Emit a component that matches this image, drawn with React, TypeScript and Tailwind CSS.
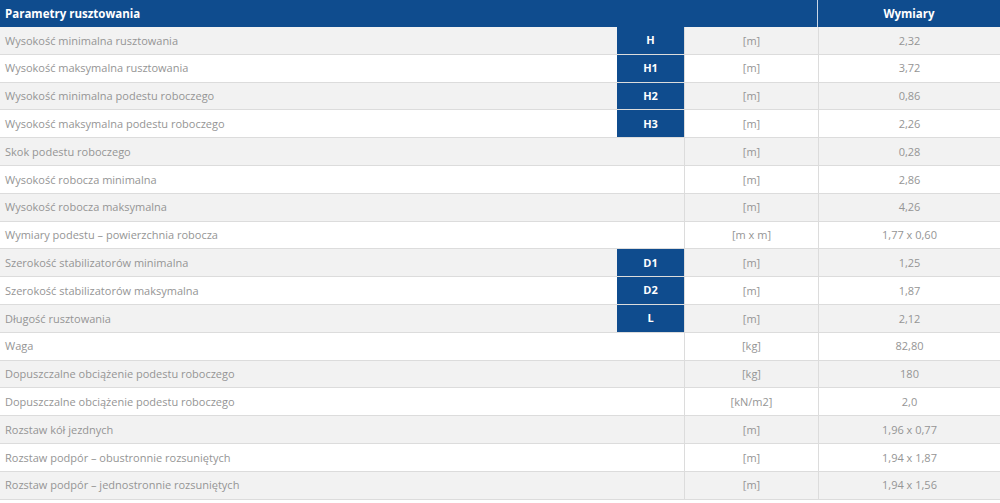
const rows: [string, string, string, string][] = [
  ['Wysokość minimalna rusztowania', 'H', '[m]', '2,32'],
  ['Wysokość maksymalna rusztowania', 'H1', '[m]', '3,72'],
  ['Wysokość minimalna podestu roboczego', 'H2', '[m]', '0,86'],
  ['Wysokość maksymalna podestu roboczego', 'H3', '[m]', '2,26'],
  ['Skok podestu roboczego', '', '[m]', '0,28'],
  ['Wysokość robocza minimalna', '', '[m]', '2,86'],
  ['Wysokość robocza maksymalna', '', '[m]', '4,26'],
  ['Wymiary podestu – powierzchnia robocza', '', '[m x m]', '1,77 x 0,60'],
  ['Szerokość stabilizatorów minimalna', 'D1', '[m]', '1,25'],
  ['Szerokość stabilizatorów maksymalna', 'D2', '[m]', '1,87'],
  ['Długość rusztowania', 'L', '[m]', '2,12'],
  ['Waga', '', '[kg]', '82,80'],
  ['Dopuszczalne obciążenie podestu roboczego', '', '[kg]', '180'],
  ['Dopuszczalne obciążenie podestu roboczego', '', '[kN/m2]', '2,0'],
  ['Rozstaw kół jezdnych', '', '[m]', '1,96 x 0,77'],
  ['Rozstaw podpór – obustronnie rozsuniętych', '', '[m]', '1,94 x 1,87'],
  ['Rozstaw podpór – jednostronnie rozsuniętych', '', '[m]', '1,94 x 1,56'],
]

export default function App() {
  return (
    <div className="w-[1000px] h-[503px] bg-white font-['Open_Sans',sans-serif] text-[11px]">
      <div className="grid grid-cols-[818px_1fr] h-[27px] bg-[#0f4c8e] text-white font-bold text-[11.5px]">
        <div className="flex items-center pl-[5px] border-r border-[#c9d6e6]">Parametry rusztowania</div>
        <div className="flex items-center justify-center">Wymiary</div>
      </div>
      {rows.map(([name, sym, unit, val], i) => (
        <div
          key={i}
          className={`grid grid-cols-[617px_67px_134px_1fr] h-[27.8px] border-b border-[#dcdcdc] text-[#959595] ${
            i % 2 === 0 ? 'bg-[#f2f2f2]' : 'bg-white'
          }`}
        >
          <div className="flex items-center pl-[5px] pt-px">{name}</div>
          <div
            className={`flex items-center justify-center font-bold text-white ${
              sym ? 'bg-[#0f4c8e]' : ''
            }`}
          >
            {sym}
          </div>
          <div className="flex items-center justify-center pt-px border-l border-[#dcdcdc]">{unit}</div>
          <div className="flex items-center justify-center pt-px border-l border-[#dcdcdc]">{val}</div>
        </div>
      ))}
    </div>
  )
}
